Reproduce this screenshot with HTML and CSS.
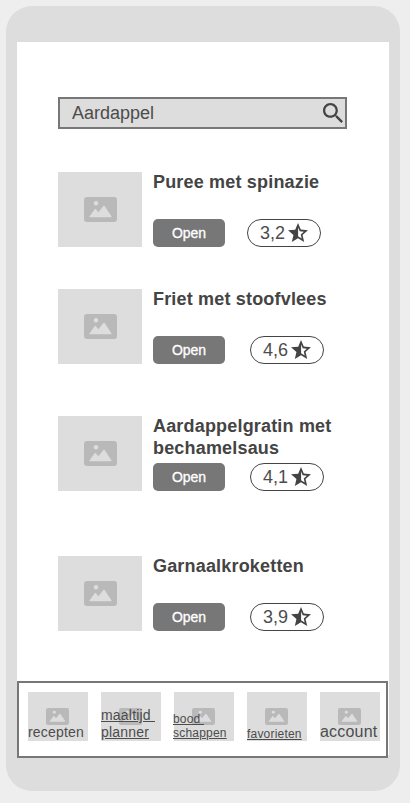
FILE: index.html
```html
<!DOCTYPE html>
<html lang="nl">
<head>
<meta charset="utf-8">
<title>Recepten</title>
<link rel="stylesheet" href="styles.css">
</head>
<body>
<svg width="0" height="0" class="defs">
  <symbol id="picture" viewBox="0 0 33 25" preserveAspectRatio="none">
    <path fill="#b9b9b9" d="M3 0H30Q33 0 33 3V22Q33 25 30 25H3Q0 25 0 22V3Q0 0 3 0Z"/>
    <circle cx="12" cy="6.3" r="2.2" fill="#dddddd"/>
    <path fill="#dddddd" d="M6 20.200Q5 20.200 5.600 19.200L10.700 12.200Q11.300 11.500 11.900 12.200L14.400 15.200L19.400 9Q20 8.400 20.600 9L27.400 19.200Q28 20.200 27 20.200Z"/>
  </symbol>
  <symbol id="star" viewBox="2 2 20 19">
    <path fill="#444444" d="M22 9.240l-7.190-.62L12 2 9.190 8.630 2 9.240l5.460 4.730L5.820 21 12 17.270 18.180 21l-1.630-7.030L22 9.240zM12.100 15.300V6.500l1.600 3.850 4.150.35-3.120 2.720.92 4L12.100 15.300z"/>
  </symbol>
</svg>
<main class="phone">
  <div class="screen">
    <div class="search">
      <span>Aardappel</span>
      <svg class="lens" viewBox="3 3 17.500 17.500"><path fill="#444444" d="M15.500 14h-.79l-.28-.27C15.410 12.590 16 11.110 16 9.500 16 5.910 13.090 3 9.500 3S3 5.910 3 9.500 5.910 16 9.500 16c1.610 0 3.090-.59 4.230-1.570l.27.28v.79l5 4.990L20.490 19l-4.990-5zm-6 0C7.010 14 5 11.990 5 9.500S7.010 5 9.500 5 14 7.010 14 9.500 11.990 14 9.500 14z"/></svg>
    </div>
    <section class="recipes">
      <article class="recipe">
        <div class="thumb"><svg><use href="#picture"/></svg></div>
        <div class="info"><h2>Puree met spinazie</h2>
          <div class="actions near"><button>Open</button><div class="rating">3,2<svg><use href="#star"/></svg></div></div></div>
      </article>
      <article class="recipe second">
        <div class="thumb"><svg><use href="#picture"/></svg></div>
        <div class="info"><h2>Friet met stoofvlees</h2>
          <div class="actions"><button>Open</button><div class="rating">4,6<svg><use href="#star"/></svg></div></div></div>
      </article>
      <article class="recipe third">
        <div class="thumb"><svg><use href="#picture"/></svg></div>
        <div class="info"><h2>Aardappelgratin met bechamelsaus</h2>
          <div class="actions"><button>Open</button><div class="rating">4,1<svg><use href="#star"/></svg></div></div></div>
      </article>
      <article class="recipe fourth">
        <div class="thumb"><svg><use href="#picture"/></svg></div>
        <div class="info"><h2>Garnaalkroketten</h2>
          <div class="actions"><button>Open</button><div class="rating">3,9<svg><use href="#star"/></svg></div></div></div>
      </article>
    </section>
    <nav class="tabs">
      <div class="tab"><svg><use href="#picture"/></svg><span class="label recepten">recepten</span></div>
      <div class="tab"><svg><use href="#picture"/></svg><span class="label linked planner">maaltijd&nbsp;<br>planner</span></div>
      <div class="tab"><svg><use href="#picture"/></svg><span class="label linked shopping">bood&nbsp;<br>schappen</span></div>
      <div class="tab"><svg><use href="#picture"/></svg><span class="label linked favorites">favorieten</span></div>
      <div class="tab"><svg><use href="#picture"/></svg><span class="label account">account</span></div>
    </nav>
  </div>
</main>
</body>
</html>
```
FILE: styles.css
```css
* { box-sizing: border-box; }
body {
  margin: 0;
  height: 803px;
  padding: 6px;
  overflow: hidden;
  background: #eeeeee;
  color: #4c4c4c;
  font-family: "Liberation Sans", Arial, sans-serif;
}
.defs { position: absolute; }
.phone {
  width: 394px;
  height: 785px;
  padding: 36px 11px 0;
  border-radius: 26px;
  background: #dddddd;
}
.screen {
  display: flex;
  flex-direction: column;
  width: 372px;
  height: 713px;
  background: #ffffff;
}
.search {
  display: flex;
  flex: none;
  align-items: center;
  justify-content: space-between;
  width: 289px;
  height: 32px;
  margin: 55px 0 0 41px;
  padding: 0 2px 0 12px;
  border: 2px solid #777777;
  background: #dddddd;
  font-size: 18px;
}
.lens { width: 20px; height: 20px; }
.recipes { flex: none; height: 552px; padding: 43px 0 0 41px; }
.recipe { display: flex; gap: 11px; height: 75px; }
.second { margin-top: 42px; }
.third { margin-top: 52px; }
.fourth { margin-top: 65px; }
.thumb {
  display: flex;
  align-items: center;
  justify-content: center;
  width: 84px;
  height: 75px;
  background: #dddddd;
}
.thumb svg { width: 33px; height: 25px; }
.info {
  display: flex;
  flex-direction: column;
  justify-content: space-between;
  width: 200px;
}
h2 {
  margin: -1px 0 0;
  color: #444444;
  font-size: 18px;
  line-height: 22px;
  letter-spacing: 0.18px;
}
.actions { display: flex; gap: 25px; }
.near { gap: 22px; }
button {
  width: 72px;
  height: 28px;
  padding: 0;
  border: 0;
  border-radius: 5px;
  background: #777777;
  color: #ffffff;
  font: 14px "Liberation Sans", Arial, sans-serif;
  -webkit-text-stroke: 0.3px #ffffff;
}
.rating {
  display: flex;
  align-items: center;
  gap: 3px;
  width: 74px;
  height: 28px;
  padding-left: 12px;
  border: 1px solid #444444;
  border-radius: 14px;
  font-size: 18px;
}
.rating svg { width: 20px; height: 19px; margin-bottom: 1px; }
.tabs {
  display: flex;
  flex: none;
  gap: 13px;
  width: 371px;
  height: 77px;
  padding: 9px;
  border: 2px solid #777777;
  background: #ffffff;
}
.tab {
  position: relative;
  display: flex;
  flex: none;
  align-items: center;
  justify-content: center;
  width: 60px;
  height: 49px;
  background: #dddddd;
}
.tab svg { width: 23px; height: 17px; margin-right: 1px; }
.label { position: absolute; left: 0; bottom: 0; white-space: nowrap; }
.linked { text-decoration: underline; }
.recepten { font-size: 14px; line-height: 17px; letter-spacing: 0.2px; }
.planner { font-size: 14px; line-height: 17px; letter-spacing: 0.2px; }
.shopping { left: -1px; bottom: 1px; font-size: 12px; line-height: 14px; letter-spacing: 0.2px; }
.favorites { font-size: 12px; line-height: 14px; letter-spacing: 0.2px; }
.account { font-size: 16px; line-height: 18px; letter-spacing: 0.2px; }
```
